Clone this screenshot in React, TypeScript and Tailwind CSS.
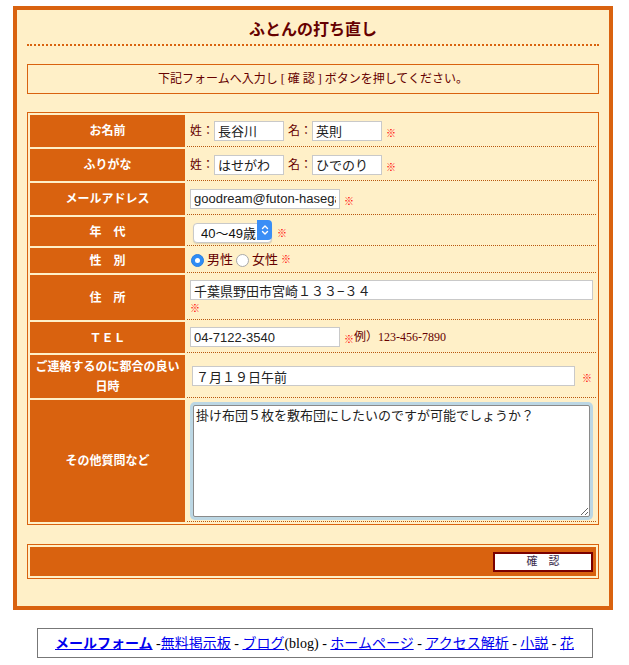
const serif = "font-['Liberation_Serif','Noto_Sans_CJK_JP',serif]";
const sans = "font-['Liberation_Sans','Noto_Sans_CJK_JP',sans-serif]";

function Label({ children }: { children: React.ReactNode }) {
  return (
    <div className={`w-[155px] shrink-0 bg-[#D9620F] text-white font-bold text-[12px] leading-[20px] flex items-center justify-center text-center ${serif}`}>
      {children}
    </div>
  );
}

function Mark() {
  return <span className={`text-[10px] font-bold leading-none text-[#ff0000] ${sans}`}>※</span>;
}

function TextInput({ value, className }: { value: string; className: string }) {
  return (
    <input
      type="text"
      defaultValue={value}
      className={`h-[20px] border border-[#c9c9c9] bg-white px-[3px] text-[13px] text-[#222] outline-none ${sans} ${className}`}
    />
  );
}

function Radio({ checked }: { checked: boolean }) {
  return checked ? (
    <span className="w-[13px] h-[13px] rounded-full bg-[#2f8cf6] border border-[#2a7fe0] flex items-center justify-center">
      <span className="w-[5px] h-[5px] rounded-full bg-white" />
    </span>
  ) : (
    <span className="w-[13px] h-[13px] rounded-full bg-white border border-[#a9a9a9]" />
  );
}

export default function App() {
  const cell = "flex-1 border-b border-dotted border-[#B8570E] flex items-center";
  const lab = `text-[12px] text-[#660000] ${serif}`;

  return (
    <div className="min-h-[665px] bg-white pt-[6px]">
      <div className="ml-[13px] w-[600px] border-4 border-[#D9620F] bg-[#FFF0C8] px-[10px] pt-[10px] pb-[27px]">
        <h1 className={`text-center text-[16px] font-bold leading-[20px] text-[#660000] pb-[4px] border-b-2 border-dotted border-[#D9620F] ${serif}`}>
          ふとんの打ち直し
        </h1>

        <div className={`mt-[18px] h-[30px] border border-[#D9620F] flex items-center justify-center text-[12px] text-[#660000] ${serif}`}>
          下記フォームへ入力し [ 確 認 ] ボタンを押してください。
        </div>

        <div className="mt-[18px] border border-[#D9620F] p-[2px] flex flex-col gap-[2px]">
          <div className="flex gap-[2px] h-[32px]">
            <Label>お名前</Label>
            <div className={`${cell} pl-[3px]`}>
              <span className={lab}>姓：</span>
              <TextInput value="長谷川" className="w-[70px]" />
              <span className={`${lab} ml-[4px]`}>名：</span>
              <TextInput value="英則" className="w-[70px]" />
              <span className="ml-[4px]"><Mark /></span>
            </div>
          </div>

          <div className="flex gap-[2px] h-[32px]">
            <Label>ふりがな</Label>
            <div className={`${cell} pl-[3px]`}>
              <span className={lab}>姓：</span>
              <TextInput value="はせがわ" className="w-[70px]" />
              <span className={`${lab} ml-[4px]`}>名：</span>
              <TextInput value="ひでのり" className="w-[70px]" />
              <span className="ml-[4px]"><Mark /></span>
            </div>
          </div>

          <div className="flex gap-[2px] h-[32px]">
            <Label>メールアドレス</Label>
            <div className={`${cell} pl-[3px]`}>
              <TextInput value="goodream@futon-hasegawa.com" className="w-[150px]" />
              <span className="ml-[4px]"><Mark /></span>
            </div>
          </div>

          <div className="flex gap-[2px] h-[29px]">
            <Label>年　代</Label>
            <div className={`${cell} pl-[6px]`}>
              <div className="relative w-[79px] h-[20px] -mt-[2px]">
                <select
                  defaultValue="40"
                  className={`appearance-none w-full h-full rounded-[4px] border border-[#c9c9c9] bg-white pl-[7px] text-[13px] text-[#111] shadow-[0_1px_1px_rgba(0,0,0,0.12)] outline-none ${sans}`}
                >
                  <option value="20">20〜29歳</option>
                  <option value="30">30〜39歳</option>
                  <option value="40">40〜49歳</option>
                  <option value="50">50〜59歳</option>
                </select>
                <span className="pointer-events-none absolute right-0 top-0 h-full w-[15px] rounded-r-[4px] bg-[#3a8ef6] flex items-center justify-center">
                  <svg width="8" height="12" viewBox="0 0 8 12" fill="none" stroke="white" strokeWidth="1.4" strokeLinecap="round" strokeLinejoin="round">
                    <path d="M1.5 4.5 L4 2 L6.5 4.5" />
                    <path d="M1.5 7.5 L4 10 L6.5 7.5" />
                  </svg>
                </span>
              </div>
              <span className="ml-[5px]"><Mark /></span>
            </div>
          </div>

          <div className="flex gap-[2px] h-[25px]">
            <Label>性　別</Label>
            <div className={`${cell} pl-[4px] gap-[3px]`}>
              <Radio checked />
              <span className={`${lab} text-[13px]`}>男性</span>
              <Radio checked={false} />
              <span className={`${lab} text-[13px]`}>女性</span>
              <Mark />
            </div>
          </div>

          <div className="flex gap-[2px] h-[45px]">
            <Label>住　所</Label>
            <div className={`${cell} pl-[3px]`}>
              <div className="flex flex-col gap-[4px]">
                <TextInput value="千葉県野田市宮崎１３３−３４" className="w-[403px]" />
                <Mark />
              </div>
            </div>
          </div>

          <div className="flex gap-[2px] h-[31px]">
            <Label>ＴＥＬ</Label>
            <div className={`${cell} pl-[3px]`}>
              <TextInput value="04-7122-3540" className="w-[150px]" />
              <span className="ml-[4px]"><Mark /></span>
              <span className={lab}>例）123-456-7890</span>
            </div>
          </div>

          <div className="flex gap-[2px] h-[43px]">
            <Label>
              ご連絡するのに都合の良い
              <br />
              日時
            </Label>
            <div className={`${cell} pl-[5px]`}>
              <TextInput value="７月１９日午前" className="w-[383px]" />
              <span className="ml-[7px]"><Mark /></span>
            </div>
          </div>

          <div className="flex gap-[2px] h-[122px]">
            <Label>その他質問など</Label>
            <div className={`${cell} pl-[6px]`}>
              <textarea
                defaultValue="掛け布団５枚を敷布団にしたいのですが可能でしょうか？"
                className={`w-[397px] h-[112px] border border-[#8a8a8a] bg-white px-[2px] py-[1px] text-[13px] leading-[17px] text-[#222] outline-none ring-[3px] ring-[#BCD7E4] rounded-[2px] ${sans}`}
              />
            </div>
          </div>
        </div>

        <div className="mt-[19px] border border-[#D9620F] p-[2px]">
          <div className="h-[29px] bg-[#D9620F] flex items-center justify-end pr-[3px]">
            <button className={`w-[100px] h-[20px] bg-white border-2 border-[#7a0000] text-[11px] leading-none text-[#3a2a4a] ${serif}`}>
              確　認
            </button>
          </div>
        </div>
      </div>

      <div className={`mx-auto mt-[18px] w-[556px] h-[30px] border border-[#777] flex items-center justify-center text-[14px] text-black whitespace-nowrap ${serif}`}>
        <a href="#" className="text-[#0000EE] underline font-bold">メールフォーム</a>
        <span>&nbsp;-</span>
        <a href="#" className="text-[#0000EE] underline">無料掲示板</a>
        <span>&nbsp;-&nbsp;</span>
        <a href="#" className="text-[#0000EE] underline">ブログ</a>
        <span>(blog)</span>
        <span>&nbsp;-&nbsp;</span>
        <a href="#" className="text-[#0000EE] underline">ホームページ</a>
        <span>&nbsp;-&nbsp;</span>
        <a href="#" className="text-[#0000EE] underline">アクセス解析</a>
        <span>&nbsp;-&nbsp;</span>
        <a href="#" className="text-[#0000EE] underline">小説</a>
        <span>&nbsp;-&nbsp;</span>
        <a href="#" className="text-[#0000EE] underline">花</a>
      </div>
    </div>
  );
}
